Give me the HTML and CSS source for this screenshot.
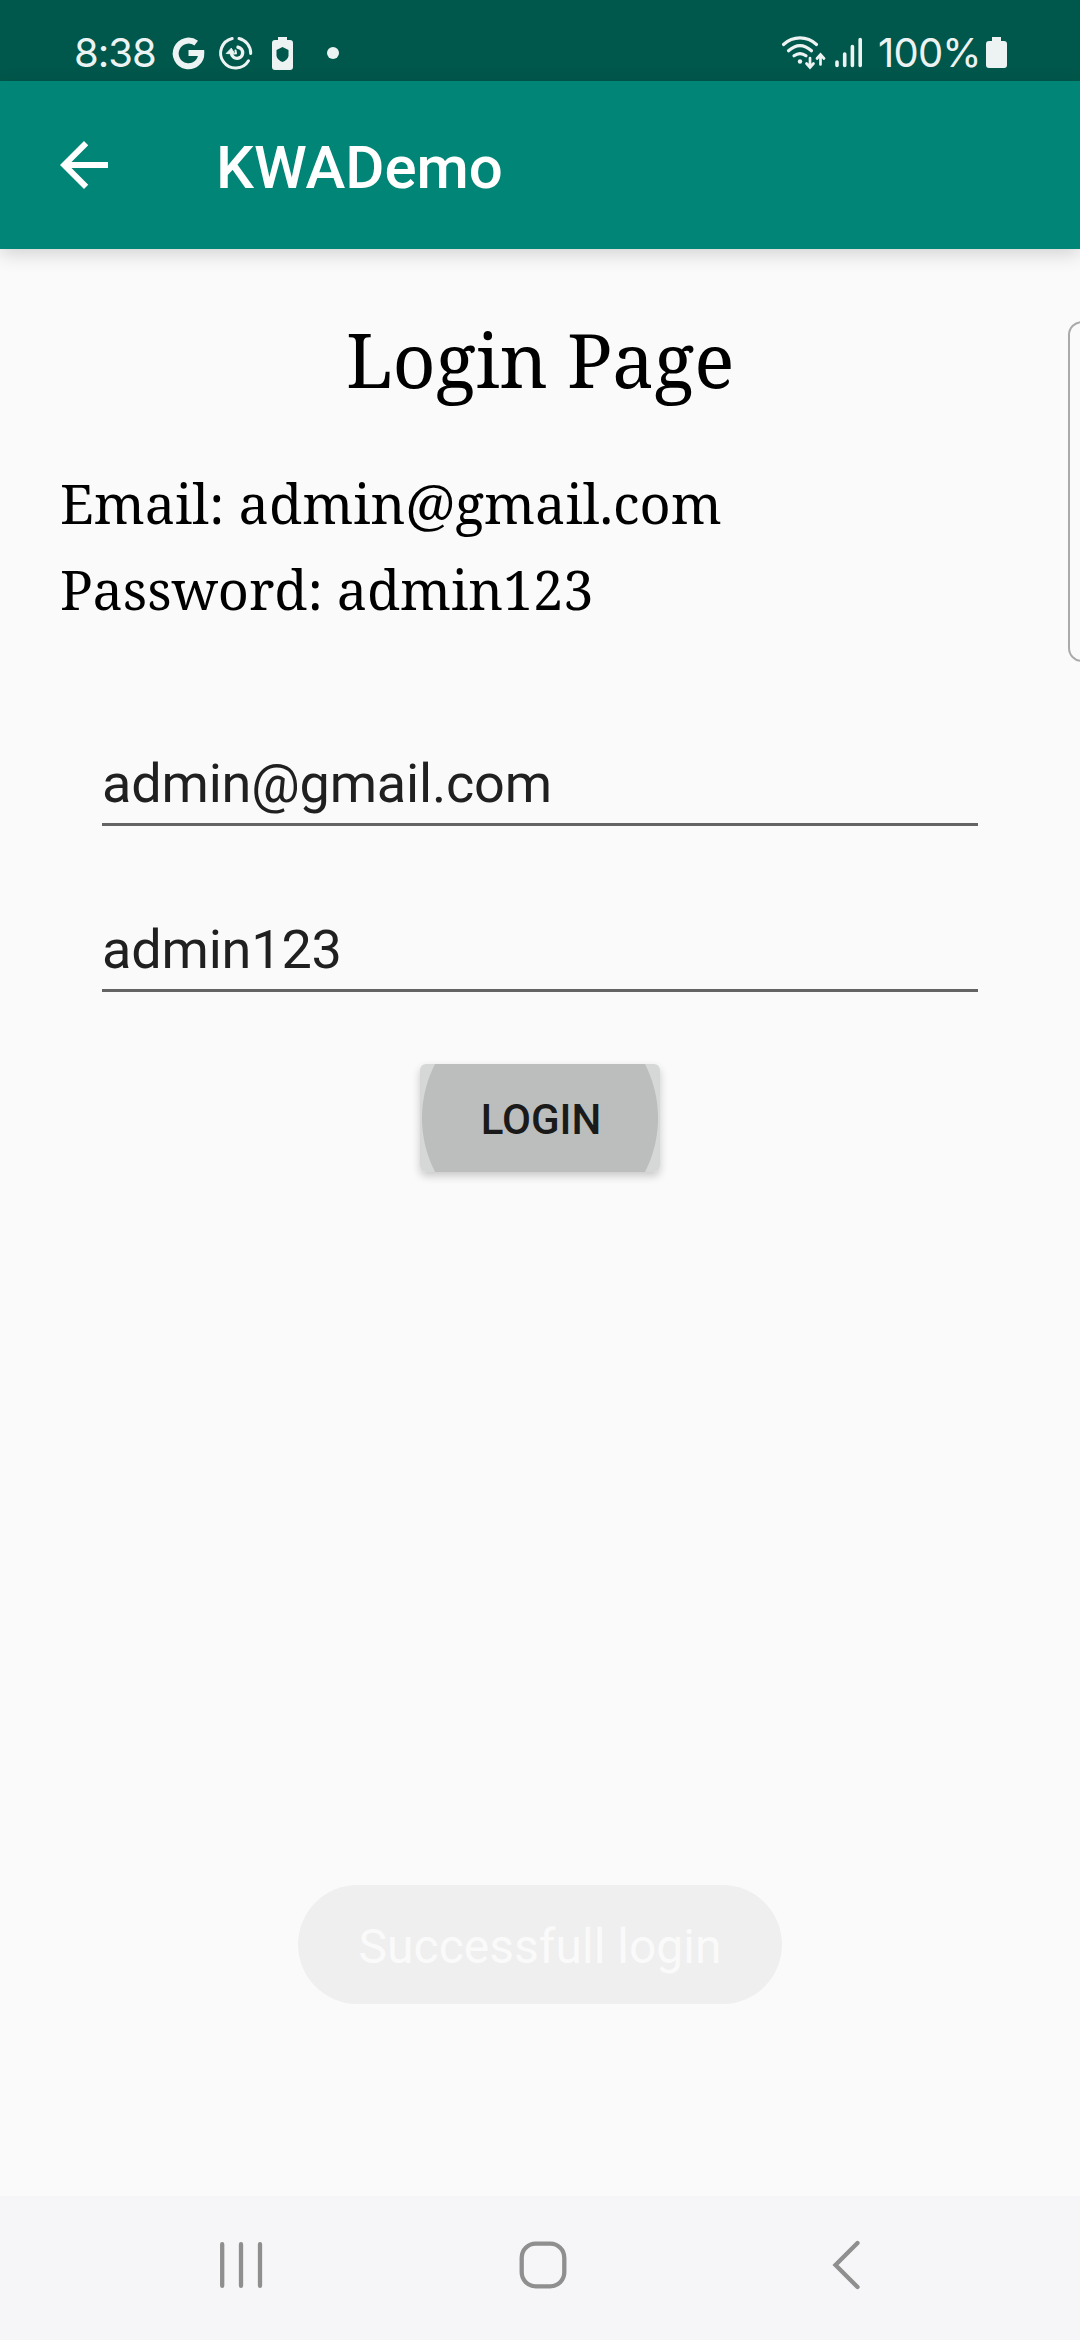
FILE: index.html
```html
<!DOCTYPE html>
<html lang="en">
<head>
<meta charset="utf-8">
<title>KWADemo</title>
<link rel="stylesheet" href="styles.css">
</head>
<body>
<div class="screen">
  <header class="status-bar">
    <span class="clock">8:38</span>
    <svg class="status-icons" width="172" height="36" viewBox="170 35 172 36" fill="none" stroke="#edf3f3">
      <path d="M196.200 43.200A12.800 12.800 0 1 0 201.300 53H188.500" stroke-width="6"/>
      <g stroke-width="3" stroke-linecap="round">
        <path d="M232.200 38.500A15 15 0 1 0 248.500 60.800M239 38.500A15 15 0 0 1 250.700 53.500"/>
        <path d="M238 47.300A5.600 5.600 0 1 1 231.500 53.500" stroke-width="3.400"/>
        <path d="M235.500 50.500l.5 3" stroke-width="2"/>
        <path d="M226.500 53.200l4.800-5 3.400 5.500z" fill="#edf3f3" stroke-width="1" stroke-linejoin="round"/>
      </g>
      <path d="M278 37h9v3h3q3 0 3 3v24q0 3-3 3h-15q-3 0-3-3v-24q0-3 3-3h3zM282.500 47l-6 3v6q1 4 6 6 5-2 6-6v-6z" fill="#edf3f3" fill-rule="evenodd" stroke="none"/>
      <circle cx="333" cy="53" r="6" fill="#edf3f3" stroke="none"/>
    </svg>
    <svg class="signal-icons" width="84" height="36" viewBox="779 35 84 36" fill="none" stroke="#edf3f3" stroke-width="3.200" stroke-linecap="round">
      <path d="M782.500 44.500C792 35.700 806 35.700 815.500 44.500M787.500 50.800C795 44 803 44 810.500 50.800M793 55.800Q799 51.400 805 55.800"/>
      <circle cx="799" cy="61.500" r="2.200" fill="#edf3f3" stroke="none"/>
      <path d="M809 58v9m-3.500-3.500L809 67.500l3.500-4M819.500 64.500v-9.500m-3.500 3.500 3.500-4 3.500 4" stroke-width="2.700"/>
      <path d="M836 62v3.500M843.700 54v11.500M851.400 46.500v19M859.200 39.500v26" stroke-width="3.600"/>
    </svg>
    <span class="charge">100%</span>
    <svg class="battery" width="21" height="31" viewBox="0 0 21 31"><path d="M6 0h9v4h3q3 0 3 3v21q0 3-3 3H3q-3 0-3-3V7q0-3 3-3h3z" fill="#edf3f3"/></svg>
  </header>
  <nav class="toolbar">
    <svg class="back-arrow" width="72" height="72" viewBox="0 0 24 24" fill="#fff"><path d="M20 11H7.830l5.590-5.590L12 4l-8 8 8 8 1.410-1.410L7.830 13H20z"/></svg>
    <span class="app-title">KWADemo</span>
  </nav>
  <main class="content">
    <h1 class="page-title">Login Page</h1>
    <p class="hint">Email: admin@gmail.com</p>
    <p class="hint hint-password">Password: admin123</p>
    <form class="login-form">
      <input class="field" type="text" value="admin@gmail.com">
      <input class="field" type="text" value="admin123">
      <button class="login-button" type="button">LOGIN</button>
    </form>
    <div class="toast">Successfull login</div>
    <div class="edge-handle"></div>
  </main>
  <footer class="system-nav">
    <svg width="1080" height="144" viewBox="0 2196 1080 144" fill="none" stroke="#8f8f8f" stroke-width="4.300" stroke-linecap="round" stroke-linejoin="round">
      <path d="M222.200 2244.200v41.600M241 2244.200v41.600M260 2244.200v41.600"/>
      <rect x="521.700" y="2243.700" width="42.600" height="42.600" rx="14"/>
      <path d="M857.500 2243l-22 22 22 22" stroke-linejoin="miter"/>
    </svg>
  </footer>
</div>
</body>
</html>
```
FILE: styles.css
```css
* { box-sizing: border-box; }
body { margin: 0; }
.screen {
  width: 1080px;
  height: 2340px;
  display: flex;
  flex-direction: column;
  background: #fafafa;
  font-family: Roboto, sans-serif;
  position: relative;
  overflow: hidden;
}
.status-bar {
  height: 81px;
  flex: none;
  display: flex;
  align-items: flex-start;
  padding: 35px 73px 0 74px;
  background: #00574b;
  color: #edf3f3;
  font: 40px/36px Inter, sans-serif;
}
.clock { width: 96px; letter-spacing: -1px; }
.signal-icons { margin-left: auto; }
.charge { width: 105px; margin-left: 14px; letter-spacing: -0.800px; white-space: nowrap; }
.battery { margin: 2px 0 0 3px; }
.toolbar {
  height: 168px;
  flex: none;
  display: flex;
  align-items: center;
  padding-left: 48px;
  background: #008577;
  box-shadow: 0 5px 18px rgba(0, 0, 0, .16);
  z-index: 1;
}
.app-title {
  margin-left: 96px;
  padding-top: 5px;
  color: #fff;
  font-size: 60px;
  font-weight: 500;
}
.content { flex: 1; display: flex; flex-direction: column; position: relative; }
.page-title {
  margin: 55px 0 46px;
  height: 110px;
  text-align: center;
  font: 75px/110px "Noto Serif", "Liberation Serif", serif;
  letter-spacing: -0.200px;
}
.hint {
  margin: 0 0 0 60px;
  height: 86px;
  font: 54px/86px "Noto Serif", "Liberation Serif", serif;
}
.hint-password { letter-spacing: -0.080px; }
.login-form {
  display: flex;
  flex-direction: column;
  align-items: center;
  padding-top: 108px;
}
.field {
  width: 876px;
  height: 86px;
  margin-bottom: 80px;
  padding: 3px 0 0;
  border: 0;
  border-bottom: 3px solid #646464;
  background: none;
  color: #202020;
  font: 54px Roboto, sans-serif;
  letter-spacing: -0.180px;
}
.login-button {
  width: 240px;
  height: 108px;
  margin-top: -8px;
  padding: 3px 0 0 2px;
  border: 0;
  border-radius: 6px;
  background: radial-gradient(circle at center, #bcbebd 117.500px, #d6d8d7 118.500px);
  box-shadow: 0 4px 8px rgba(0, 0, 0, .2);
  color: #191a19;
  font: 500 42px Roboto, sans-serif;
}
.toast {
  width: 484px;
  height: 119px;
  margin: auto auto 192px;
  border-radius: 60px;
  background: #efefef;
  color: #fafafa;
  font-size: 48px;
  line-height: 124px;
  text-align: center;
}
.edge-handle {
  position: absolute;
  left: 1068px;
  top: 72px;
  width: 30px;
  height: 341px;
  border: 2px solid #aaa;
  border-radius: 14px;
}
.system-nav { height: 144px; flex: none; background: #f6f6f8; }
.system-nav svg { display: block; }
```
